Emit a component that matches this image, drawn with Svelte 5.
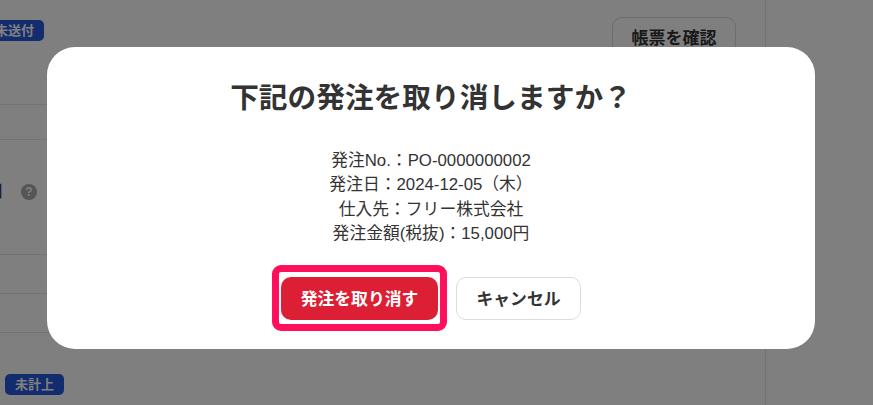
<script>
	const details = [
		'発注No.：PO-0000000002',
		'発注日：2024-12-05（木）',
		'仕入先：フリー株式会社',
		'発注金額(税抜)：15,000円'
	];
</script>

<div class="page">
	<div class="main">
		<div class="row head">
			<span class="badge first">未送付</span>
			<button class="ghost">帳票を確認</button>
		</div>
		<div class="row r2"></div>
		<div class="row r3">
			<span class="label">発注日</span>
			<span class="help">?</span>
		</div>
		<div class="row r4"></div>
		<div class="row r5"></div>
		<div class="row last">
			<span class="badge">未計上</span>
		</div>
	</div>
</div>

<div class="overlay"></div>

<div class="modal">
	<h2>下記の発注を取り消しますか？</h2>
	<div class="details">
		{#each details as line}
			<p>{line}</p>
		{/each}
	</div>
	<div class="actions">
		<div class="mark">
			<button class="danger">発注を取り消す</button>
		</div>
		<button class="cancel">キャンセル</button>
	</div>
</div>

<style>
	:global(body) {
		margin: 0;
		background: #fff;
		font-family: "Liberation Sans", "Noto Sans CJK JP", sans-serif;
		color: #333;
		overflow: hidden;
	}

	.page {
		width: 873px;
		height: 405px;
		overflow: hidden;
	}

	.main {
		width: 766px;
		height: 405px;
		box-sizing: border-box;
		border-right: 1px solid #e4e4e4;
	}

	.row {
		box-sizing: border-box;
		border-bottom: 1px solid #e4e4e4;
		display: flex;
		align-items: center;
	}

	.head {
		height: 105px;
		align-items: flex-start;
		justify-content: space-between;
		padding: 17px 29px 0 0;
	}

	.r2 {
		height: 35px;
	}

	.r3 {
		height: 115px;
		align-items: flex-start;
		padding-top: 41px;
		gap: 17px;
	}

	.r4,
	.r5 {
		height: 39px;
	}

	.last {
		border-bottom: none;
		padding: 41px 0 0 5px;
		align-items: flex-start;
	}

	.badge {
		flex: none;
		width: 59px;
		height: 21px;
		border-radius: 5px;
		background: #2558dc;
		color: #fff;
		font-size: 13px;
		font-weight: 700;
		line-height: 21px;
		text-align: center;
	}

	.first {
		margin: 3px 0 0 -15px;
	}

	.ghost {
		width: 124px;
		height: 54px;
		padding: 0 0 15px;
		border: 1px solid #d8d8d8;
		border-radius: 10px;
		background: #fff;
		color: #333;
		font: 700 17px "Liberation Sans", "Noto Sans CJK JP", sans-serif;
	}

	.label {
		margin-left: -47px;
		width: 51px;
		font-size: 17px;
		line-height: 22px;
		white-space: nowrap;
	}

	.help {
		width: 16px;
		height: 16px;
		margin-top: 3px;
		border-radius: 50%;
		background: #aaa;
		color: #fff;
		font-size: 12px;
		font-weight: 700;
		line-height: 16px;
		text-align: center;
	}

	.overlay {
		position: fixed;
		inset: 0;
		background: rgba(0, 0, 0, 0.5);
	}

	.modal {
		position: fixed;
		left: 47px;
		top: 47px;
		width: 768px;
		height: 302px;
		box-sizing: border-box;
		padding-top: 30px;
		border-radius: 28px;
		background: #fff;
		text-align: center;
	}

	h2 {
		margin: 0;
		font-size: 28.7px;
		line-height: 42px;
		font-weight: 700;
		color: #333;
	}

	.details {
		margin-top: 30px;
	}

	.details p {
		margin: 0;
		font-size: 16.8px;
		line-height: 24.4px;
		color: #333;
	}

	.actions {
		display: flex;
		justify-content: center;
		gap: 18px;
		margin-top: 30px;
	}

	.mark {
		position: relative;
	}

	.mark::after {
		content: '';
		position: absolute;
		inset: -12px -9px -11px -9px;
		border: 7px solid #ff0f5c;
		border-radius: 9px;
		pointer-events: none;
	}

	.actions button {
		display: block;
		height: 43px;
		border-radius: 10px;
		font: 700 16.8px "Liberation Sans", "Noto Sans CJK JP", sans-serif;
	}

	.danger {
		width: 157px;
		padding: 0;
		border: none;
		background: #dc1f35;
		color: #fff;
	}

	.cancel {
		width: 125px;
		padding: 0;
		border: 1px solid #dcdcdc;
		background: #fff;
		color: #333;
	}
</style>
